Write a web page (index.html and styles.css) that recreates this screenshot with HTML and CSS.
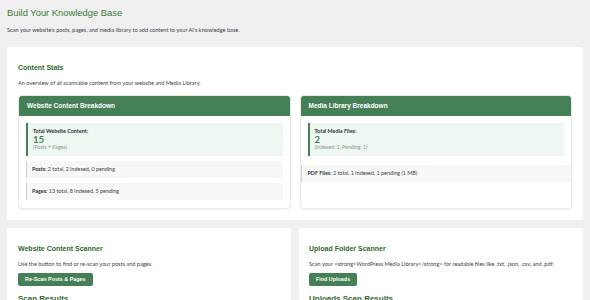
FILE: index.html
```html
<!DOCTYPE html>
<html>
<head>
<meta charset="utf-8">
<link rel="stylesheet" href="styles.css">
</head>
<body>
<div class="wrap">
  <h1 class="title">Build Your Knowledge Base</h1>
  <p class="lead">Scan your website's posts, pages, and media library to add content to your AI's knowledge base.</p>

  <section class="panel">
    <h2 class="heading">Content Stats</h2>
    <p class="desc">An overview of all scannable content from your website and Media Library.</p>
    <div class="cards">
      <div class="card">
        <div class="card-head">Website Content Breakdown</div>
        <div class="card-body">
          <div class="stat">
            <div class="stat-label">Total Website Content:</div>
            <div class="stat-num">15</div>
            <div class="stat-sub">(Posts + Pages)</div>
          </div>
          <div class="row"><b>Posts:</b> 2 total, 2 indexed, 0 pending</div>
          <div class="row"><b>Pages:</b> 13 total, 8 indexed, 5 pending</div>
        </div>
      </div>
      <div class="card">
        <div class="card-head">Media Library Breakdown</div>
        <div class="card-body">
          <div class="stat">
            <div class="stat-label">Total Media Files:</div>
            <div class="stat-num">2</div>
            <div class="stat-sub">(Indexed: 1, Pending: 1)</div>
          </div>
        </div>
        <div class="row row-wide"><b>PDF Files:</b> 2 total, 1 indexed, 1 pending (1 MB)</div>
      </div>
    </div>
  </section>

  <div class="lower">
    <section class="panel">
      <h2 class="heading">Website Content Scanner</h2>
      <p class="desc">Use the button to find or re-scan your posts and pages.</p>
      <button class="btn">Re-Scan Posts &amp; Pages</button>
      <h3 class="subheading">Scan Results</h3>
    </section>
    <section class="panel panel-r">
      <h2 class="heading">Upload Folder Scanner</h2>
      <p class="desc">Scan your &lt;strong&gt;WordPress Media Library&lt;/strong&gt; for readable files like .txt, .json, .csv, and .pdf.</p>
      <button class="btn">Find Uploads</button>
      <h3 class="subheading">Uploads Scan Results</h3>
    </section>
  </div>
</div>
</body>
</html>
```

FILE: styles.css
```css
* { box-sizing: border-box; }
html, body { margin: 0; padding: 0; }
body {
  background: #f0f0f1;
  font-family: Lato, "Open Sans", sans-serif;
  color: #3c434a;
  width: 590px;
  height: 300px;
  overflow: hidden;
}
.wrap { padding: 7px 7px 0 7px; }
.title {
  margin: 0;
  font-family: "Liberation Sans", Arial, sans-serif;
  font-weight: normal;
  font-size: 9.4px;
  line-height: 12px;
  color: #3b7a36;
}
.lead {
  margin: 7px 0 13px;
  font-size: 5.6px;
  line-height: 8px;
}
.panel {
  background: #fff;
  border-radius: 3px;
  padding: 17px 11px 11px;
}
.heading {
  margin: 0;
  font-family: "Liberation Sans", Arial, sans-serif;
  font-weight: bold;
  font-size: 7px;
  line-height: 8px;
  color: #2f6a2e;
}
.desc {
  margin: 7px 0 0;
  font-size: 5.6px;
  line-height: 8px;
}
.cards {
  display: grid;
  grid-template-columns: 1fr 1fr;
  gap: 9px;
  margin-top: 8px;
}
.card {
  background: #fff;
  border: 1px solid #e6ebe7;
  border-radius: 4px;
  box-shadow: 0 1px 2px rgba(0,0,0,0.06);
  overflow: hidden;
}
.card-head {
  background: #447f56;
  color: #fff;
  font-family: "Liberation Sans", Arial, sans-serif;
  font-weight: bold;
  font-size: 6.5px;
  height: 20px;
  line-height: 19px;
  padding: 0 8px;
}
.card-body { padding: 7px 7px 8px; }
.stat {
  background: #eef7f0;
  border-left: 2px solid #447f56;
  padding: 5px 5px;
  height: 33px;
}
.stat-label {
  font-weight: bold;
  font-size: 5.4px;
  line-height: 7px;
  color: #2c3338;
}
.stat-num {
  font-weight: bold;
  font-size: 9.6px;
  line-height: 9px;
  color: #447f56;
}
.stat-sub {
  font-size: 5.2px;
  line-height: 7px;
  color: #8c968f;
}
.row {
  margin-top: 5px;
  background: #f6f8f6;
  border-left: 1px solid #c9d6cc;
  padding: 0 5px;
  height: 17px;
  line-height: 17px;
  font-size: 5.4px;
  color: #3c434a;
}
.row b { color: #2c3338; }
.row-wide { margin-top: 1px; padding-left: 6px; }
.lower {
  display: grid;
  grid-template-columns: 1fr 1fr;
  gap: 8px;
  margin-top: 8px;
}
.panel-r { padding-left: 10px; }
.btn {
  display: block;
  margin-top: 5px;
  height: 13px;
  padding: 0 7px;
  border: 0;
  border-radius: 2px;
  background: #447f56;
  color: #fff;
  font-family: "Liberation Sans", Arial, sans-serif;
  font-weight: bold;
  font-size: 5.4px;
  line-height: 13px;
}
.subheading {
  margin: 8px 0 0;
  font-family: "Liberation Sans", Arial, sans-serif;
  font-weight: bold;
  font-size: 8px;
  line-height: 10px;
  color: #2f6a2e;
}
```
